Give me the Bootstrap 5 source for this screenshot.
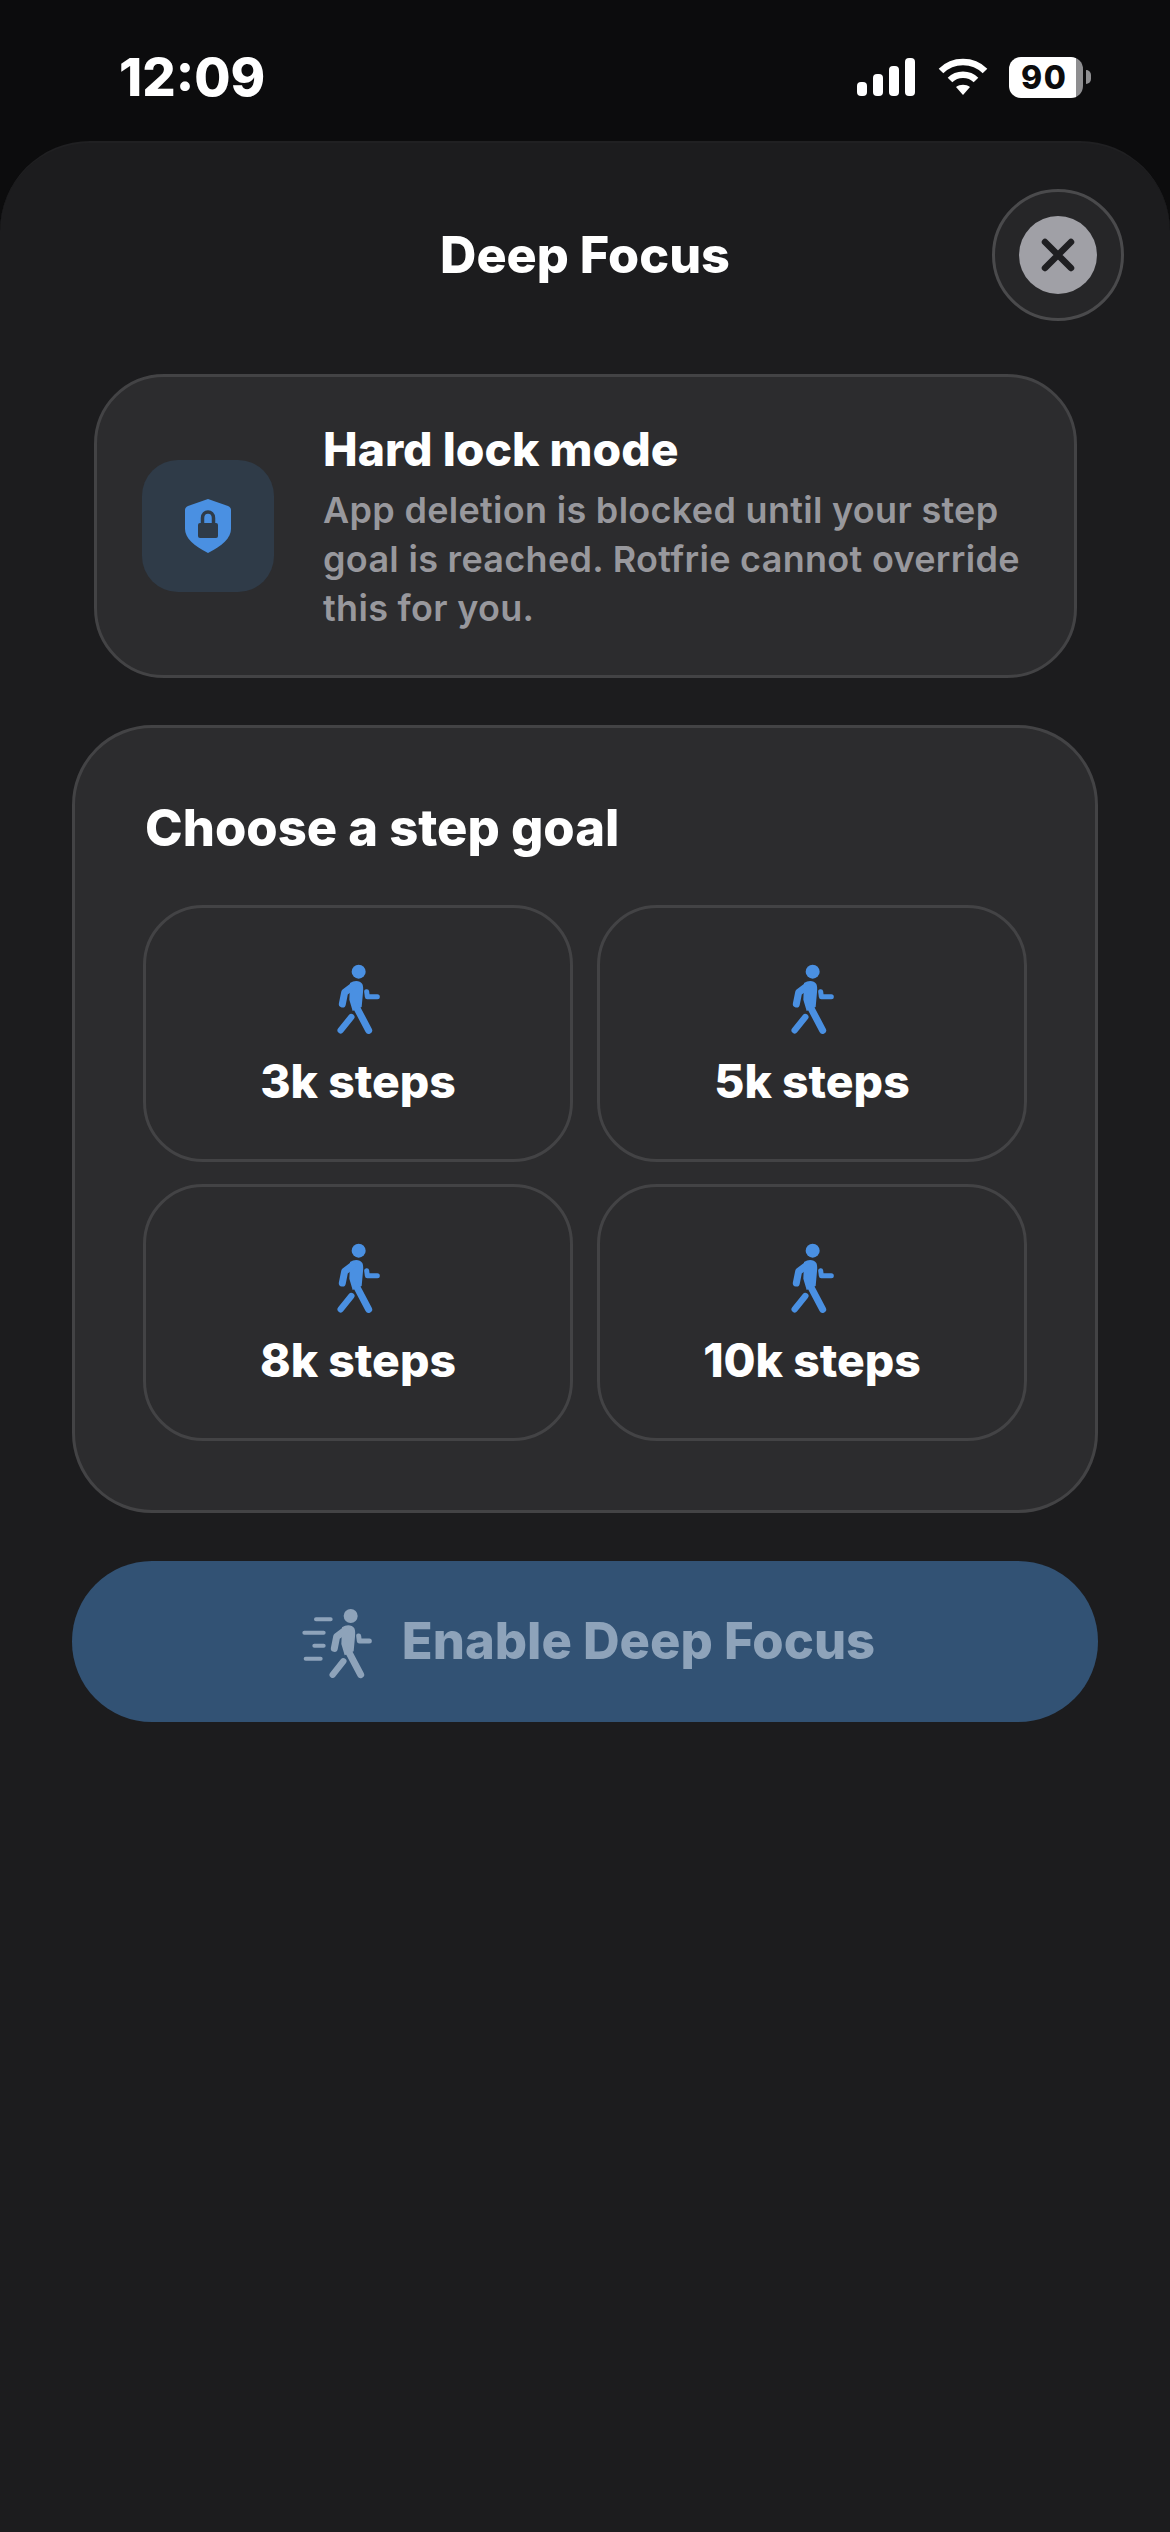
<!doctype html>
<html lang="en">
  <head>
    <meta charset="utf-8">
    <meta name="viewport" content="width=device-width, initial-scale=1">
    <title>Deep Focus</title>
    <link href="https://cdn.jsdelivr.net/npm/bootstrap@5.3.6/dist/css/bootstrap.min.css" rel="stylesheet">
    <style>
      body {
        background: #0c0c0d;
        font-family: Inter, "Liberation Sans", sans-serif;
        color: #fff;
        min-height: 2532px;
      }
      .status-row {
        height: 141px;
        padding: 0 79px 0 119px;
      }
      .status-time {
        font-size: 52.5px;
        font-weight: 800;
        line-height: 1;
        margin-top: 13px;
      }
      .status-icons {
        gap: 21px;
        margin-top: 13px;
      }
      .batt-body {
        width: 74px;
        height: 41px;
        border-radius: 12px;
        background: linear-gradient(to right, #fff 90%, #8e8e90 90%);
        color: #0c0c0d;
        font-size: 32px;
        font-weight: 800;
        line-height: 41px;
        padding-left: 12px;
        letter-spacing: 1.5px;
      }
      .batt-nub {
        width: 5px;
        height: 14px;
        margin-left: 3px;
        background: #8e8e90;
        border-radius: 0 7px 7px 0;
      }
      .sheet {
        background: #1c1c1e;
        border-radius: 90px 90px 0 0;
        border-top: 2px solid #202022;
        min-height: 2391px;
        padding: 0 72px;
      }
      .sheet-head {
        height: 231px;
        position: relative;
        padding-bottom: 6px;
      }
      .sheet-title {
        font-size: 50.3px;
        font-weight: 800;
        line-height: 1;
        margin: 0;
      }
      .close-ring {
        position: absolute;
        top: 46px;
        right: -26px;
        width: 132px;
        height: 132px;
        border-radius: 50%;
        background: #262628;
        border: 3px solid #4a4a4c;
      }
      .close-dot {
        width: 78px;
        height: 78px;
        border-radius: 50%;
        background: #a0a0a6;
      }
      .lock-panel {
        margin: 0 21px 47px 22px;
        height: 304px;
        background: #2c2c2e;
        border: 3px solid #434345;
        border-radius: 70px;
        padding: 0 30px 0 45px;
        gap: 50px;
      }
      .lock-tile {
        width: 132px;
        height: 132px;
        flex-shrink: 0;
        border-radius: 36px;
        background: #2f3b48;
      }
      .lock-copy {
        padding-top: 4px;
      }
      .lock-title {
        font-size: 46.3px;
        font-weight: 800;
        line-height: 52px;
        margin: 0 0 11px -1px;
      }
      .lock-text {
        font-size: 36px;
        font-weight: 600;
        line-height: 49px;
        letter-spacing: 0.3px;
        color: #98989d;
        margin: 0 0 0 -1px;
      }
      .goal-panel {
        height: 788px;
        margin-bottom: 48px;
        background: #2c2c2e;
        border: 3px solid #434345;
        border-radius: 80px;
        padding: 68px 68px 0;
      }
      .goal-title {
        font-size: 50.7px;
        font-weight: 800;
        line-height: 64px;
        margin: 0 0 45px 2px;
      }
      .goal-grid {
        grid-template-columns: 430px 430px;
        gap: 22px 24px;
      }
      .goal-tile {
        height: 257px;
        background: transparent;
        border: 3px solid #434345;
        border-radius: 60px;
        color: #fff;
        padding: 0;
        font-size: 46.3px;
        font-weight: 800;
        line-height: 46px;
      }
      .walk-icon {
        color: #4a90e2;
        margin: 41px 0 19px 4px;
      }
      .enable-btn {
        height: 161px;
        width: 100%;
        border: 0;
        border-radius: 80px;
        background: #325274;
        color: #8ea3ba;
        font-size: 50.7px;
        font-weight: 800;
        gap: 12px;
        padding: 0 5px 0 0;
      }
      .enable-icon {
        margin-bottom: 13px;
      }
    </style>
  </head>
  <body>
    <svg width="0" height="0" class="position-absolute">
      <symbol id="walker" viewBox="0 0 300 270">
        <circle cx="146" cy="68" r="21" fill="currentColor"/>
        <path d="M120 102c13-9 30-8 37 3 3 6 3 15 2 25l-4 44-27 12-10-34z" fill="currentColor"/>
        <g fill="none" stroke="currentColor" stroke-linecap="round" stroke-linejoin="round">
          <path d="M128 112L104 130 97 165" stroke-width="21"/>
          <path d="M138 172L176 244" stroke-width="21"/>
          <path d="M124 204L92 244" stroke-width="19"/>
          <path d="M170 128L172 143H202" stroke-width="15"/>
        </g>
      </symbol>
    </svg>

    <div class="status-row d-flex align-items-center justify-content-between">
      <div class="status-time">12:09</div>
      <div class="status-icons d-flex align-items-center">
        <svg width="60" height="38" viewBox="0 0 60 38" fill="#fff">
          <rect x="0" y="24" width="10" height="14" rx="4"/>
          <rect x="16" y="16" width="10" height="22" rx="4"/>
          <rect x="32" y="8" width="10" height="30" rx="4"/>
          <rect x="48" y="0" width="10" height="38" rx="4"/>
        </svg>
        <svg width="50" height="38" viewBox="0 0 50 38" fill="none" stroke="#fff" stroke-width="6.5">
          <path d="M3 13C15 1 35 1 47 13"/>
          <path d="M12 22C19 15 31 15 38 22"/>
          <path d="M18 29c4-3 10-3 14 0l-7 8z" fill="#fff" stroke="none"/>
        </svg>
        <div class="d-flex align-items-center">
          <div class="batt-body">90</div>
          <div class="batt-nub"></div>
        </div>
      </div>
    </div>

    <div class="sheet">
      <div class="sheet-head d-flex align-items-center justify-content-center">
        <h1 class="sheet-title">Deep Focus</h1>
        <div class="close-ring d-flex align-items-center justify-content-center">
          <div class="close-dot d-flex align-items-center justify-content-center">
            <svg width="34" height="34" viewBox="0 0 34 34" stroke="#1f1f22" stroke-width="6.5" stroke-linecap="round">
              <path d="M4 4L30 30M30 4L4 30"/>
            </svg>
          </div>
        </div>
      </div>

      <div class="lock-panel d-flex align-items-center">
        <div class="lock-tile d-flex align-items-center justify-content-center">
          <svg width="46" height="54" viewBox="0 0 46 54">
            <path d="M23 0l20 7c2 1 3 2 3 4v19c0 9-9 17-23 24C9 47 0 39 0 30V11c0-2 1-3 3-4z" fill="#4a90e2"/>
            <path d="M17.5 26v-7c0-8 11-8 11 0v7" fill="none" stroke="#2f3b48" stroke-width="3.5"/>
            <rect x="13" y="24" width="20" height="15" rx="2" fill="#2f3b48"/>
          </svg>
        </div>
        <div class="lock-copy">
          <h2 class="lock-title">Hard lock mode</h2>
          <p class="lock-text">App deletion is blocked until your step goal is reached. Rotfrie cannot override this for you.</p>
        </div>
      </div>

      <div class="goal-panel">
        <h2 class="goal-title">Choose a step goal</h2>
        <div class="goal-grid d-grid">
          <button class="goal-tile d-flex flex-column align-items-center" type="button">
            <svg class="walk-icon" width="100" height="90"><use href="#walker"/></svg>
            3k steps
          </button>
          <button class="goal-tile d-flex flex-column align-items-center" type="button">
            <svg class="walk-icon" width="100" height="90"><use href="#walker"/></svg>
            5k steps
          </button>
          <button class="goal-tile d-flex flex-column align-items-center" type="button">
            <svg class="walk-icon" width="100" height="90"><use href="#walker"/></svg>
            8k steps
          </button>
          <button class="goal-tile d-flex flex-column align-items-center" type="button">
            <svg class="walk-icon" width="100" height="90"><use href="#walker"/></svg>
            10k steps
          </button>
        </div>
      </div>

      <button class="enable-btn d-flex align-items-center justify-content-center" type="button">
        <svg class="enable-icon" width="100" height="90" viewBox="0 0 300 270">
          <path d="M78 88h44M43 128h58M73 167h28M47 206h45" stroke="#8ea3ba" stroke-width="12" stroke-linecap="round"/>
          <use href="#walker" x="36" y="10" width="300" height="270"/>
        </svg>
        Enable Deep Focus
      </button>
    </div>

    <script src="https://cdn.jsdelivr.net/npm/bootstrap@5.3.6/dist/js/bootstrap.bundle.min.js"></script>
  </body>
</html>
